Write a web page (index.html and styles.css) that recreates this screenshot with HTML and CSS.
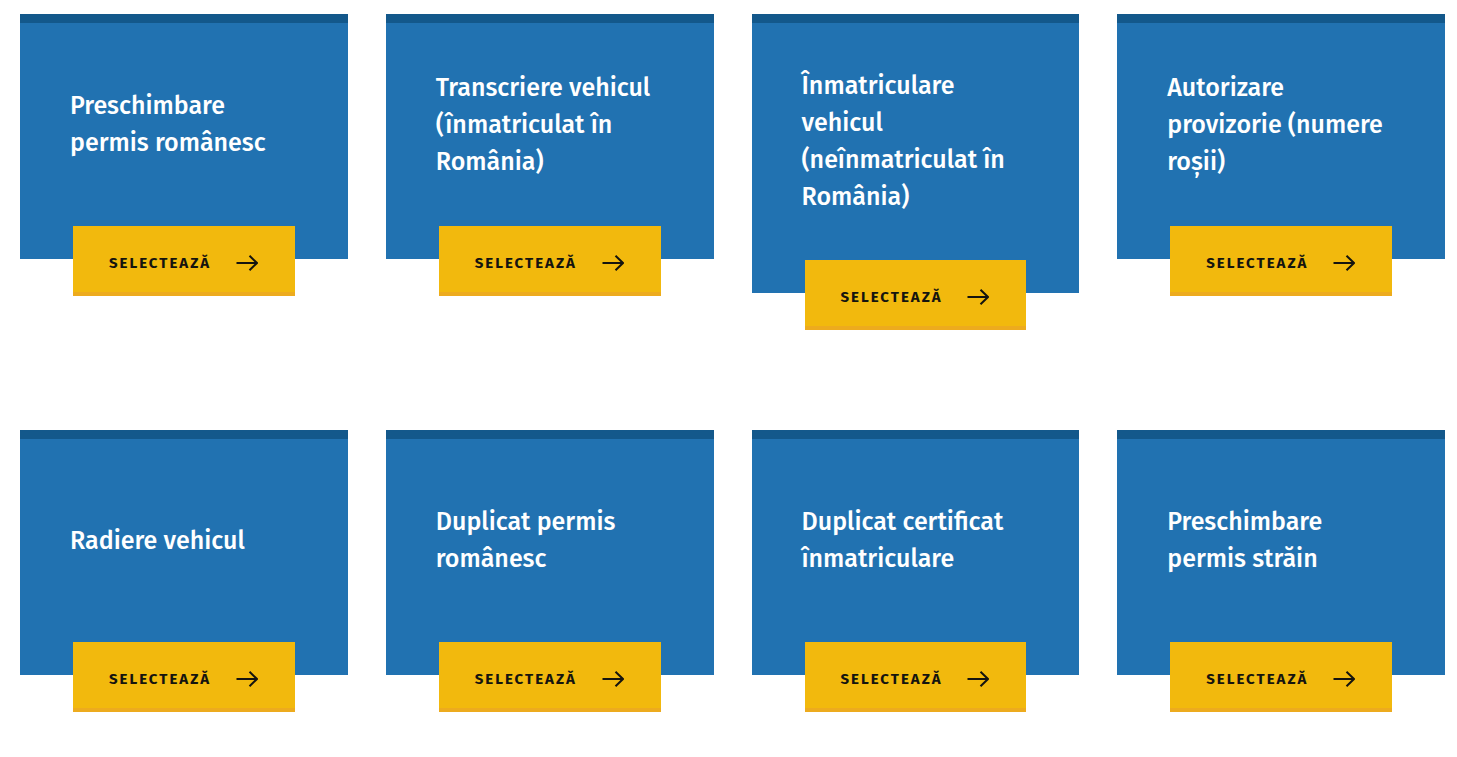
FILE: index.html
```html
<!DOCTYPE html>
<html lang="ro">
<head>
  <meta charset="UTF-8">
  <meta name="viewport" content="width=device-width, initial-scale=1">
  <title>Servicii</title>
  <link rel="stylesheet" href="styles.css">
</head>
<body>

  <!-- Arrow shared by all the buttons -->
  <svg class="sprite" width="0" height="0" aria-hidden="true">
    <symbol id="arrow" viewBox="0 0 22 16">
      <path d="M0.5 8H21M13.5 0.8L21 8L13.5 15.2" fill="none" stroke="currentColor" stroke-width="2"/>
    </symbol>
  </svg>

  <main class="services">
    <div class="card">
      <h2 class="card-title">Preschimbare permis românesc</h2>
      <a class="card-button" href="#">Selectează <svg class="arrow" aria-hidden="true"><use href="#arrow"/></svg></a>
    </div>
    <div class="card">
      <h2 class="card-title">Transcriere vehicul (înmatriculat în România)</h2>
      <a class="card-button" href="#">Selectează <svg class="arrow" aria-hidden="true"><use href="#arrow"/></svg></a>
    </div>
    <div class="card">
      <h2 class="card-title">Înmatriculare vehicul (neînmatriculat în România)</h2>
      <a class="card-button" href="#">Selectează <svg class="arrow" aria-hidden="true"><use href="#arrow"/></svg></a>
    </div>
    <div class="card">
      <h2 class="card-title">Autorizare provizorie (numere roșii)</h2>
      <a class="card-button" href="#">Selectează <svg class="arrow" aria-hidden="true"><use href="#arrow"/></svg></a>
    </div>
    <div class="card">
      <h2 class="card-title">Radiere vehicul</h2>
      <a class="card-button" href="#">Selectează <svg class="arrow" aria-hidden="true"><use href="#arrow"/></svg></a>
    </div>
    <div class="card">
      <h2 class="card-title">Duplicat permis românesc</h2>
      <a class="card-button" href="#">Selectează <svg class="arrow" aria-hidden="true"><use href="#arrow"/></svg></a>
    </div>
    <div class="card">
      <h2 class="card-title">Duplicat certificat înmatriculare</h2>
      <a class="card-button" href="#">Selectează <svg class="arrow" aria-hidden="true"><use href="#arrow"/></svg></a>
    </div>
    <div class="card">
      <h2 class="card-title">Preschimbare permis străin</h2>
      <a class="card-button" href="#">Selectează <svg class="arrow" aria-hidden="true"><use href="#arrow"/></svg></a>
    </div>
  </main>

</body>
</html>
```
FILE: styles.css
```css
* {
  box-sizing: border-box;
}

body {
  margin: 0;
  background: #fff;
  font-family: "Fira Sans", "Noto Sans", sans-serif;
}

.sprite {
  display: block;
}

.services {
  display: grid;
  grid-template-columns: repeat(4, 1fr);
  align-items: start;
  gap: 137px 38px;
  padding: 14px 12px 44px 20px;
}

.card {
  display: flex;
  flex-direction: column;
  min-height: 245px;
  padding: 45px 50px 0;
  background: #2172b1;
  border-top: 9px solid #13588b;
}

.card-title {
  display: flex;
  flex: 1;
  align-items: center;
  margin: 0 0 44px;
  color: #fff;
  font-size: 25px;
  font-weight: 500;
  line-height: 37px;
}

/* hangs over the bottom edge of the card */
.card-button {
  display: flex;
  align-items: center;
  justify-content: space-between;
  height: 70px;
  margin: 0 3px -37px;
  padding: 7px 37px 0 36px;
  background: #f2b90d;
  border-bottom: 4px solid #edab1e;
  color: #15140f;
  font-size: 15px;
  font-weight: 700;
  letter-spacing: 2px;
  text-decoration: none;
  text-transform: uppercase;
}

.card-button:hover {
  background: #edab1e;
}

.arrow {
  width: 22px;
  height: 16px;
}
```
